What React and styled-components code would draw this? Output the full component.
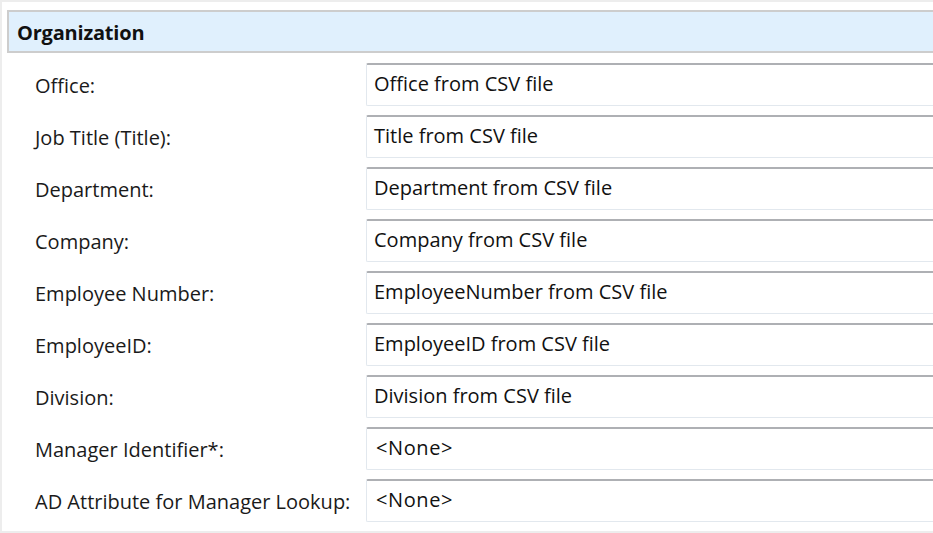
import React from 'react';
import styled, { createGlobalStyle } from 'styled-components';

const GlobalStyle = createGlobalStyle`
  body {
    margin: 0;
    background: #ffffff;
    font-family: "Open Sans", "Noto Sans", sans-serif;
  }
`;

const Panel = styled.div`
  width: 933px;
  height: 533px;
  box-sizing: border-box;
  border: 2px solid #ededed;
  border-right: none;
  padding: 8px 0 0 5px;
  overflow: hidden;
`;

const Header = styled.div`
  height: 43px;
  box-sizing: border-box;
  display: flex;
  align-items: center;
  padding: 1px 0 0 8px;
  background: #e0f0fd;
  border: 2px solid #cdcdcd;
  border-right: none;
  font-size: 20px;
  font-weight: 700;
  color: #111;
  letter-spacing: -0.2px;
`;

const Fields = styled.div`
  display: grid;
  grid-template-columns: 331px 1fr;
  row-gap: 9px;
  padding: 10px 0 0 28px;
`;

const Label = styled.div`
  display: flex;
  align-items: center;
  height: 43px;
  font-size: 20px;
  color: #1a1a1a;
  padding-top: 2px;
  box-sizing: border-box;
  white-space: nowrap;
`;

const Field = styled.div`
  height: 43px;
  box-sizing: border-box;
  display: flex;
  align-items: center;
  padding: 0 0 3px 7px;
  border: 1px solid #e2e8ee;
  border-top: 2px solid #aeb0b4;
  border-right: none;
  border-radius: 2px 0 0 2px;
  font-size: 20px;
  color: #111;
  background: #fff;
  white-space: nowrap;
  letter-spacing: ${p => (p.$spaced ? '0.6px' : '0')};
  padding-left: ${p => (p.$spaced ? '9px' : '7px')};
`;

const rows = [
  ['Office:', 'Office from CSV file'],
  ['Job Title (Title):', 'Title from CSV file'],
  ['Department:', 'Department from CSV file'],
  ['Company:', 'Company from CSV file'],
  ['Employee Number:', 'EmployeeNumber from CSV file'],
  ['EmployeeID:', 'EmployeeID from CSV file'],
  ['Division:', 'Division from CSV file'],
  ['Manager Identifier*:', '<None>'],
  ['AD Attribute for Manager Lookup:', '<None>'],
];

export default function App() {
  return (
    <>
      <GlobalStyle />
      <Panel>
        <Header>Organization</Header>
        <Fields>
          {rows.map(([label, value]) => (
            <React.Fragment key={label}>
              <Label>{label}</Label>
              <Field $spaced={value === '<None>'}>{value}</Field>
            </React.Fragment>
          ))}
        </Fields>
      </Panel>
    </>
  );
}
